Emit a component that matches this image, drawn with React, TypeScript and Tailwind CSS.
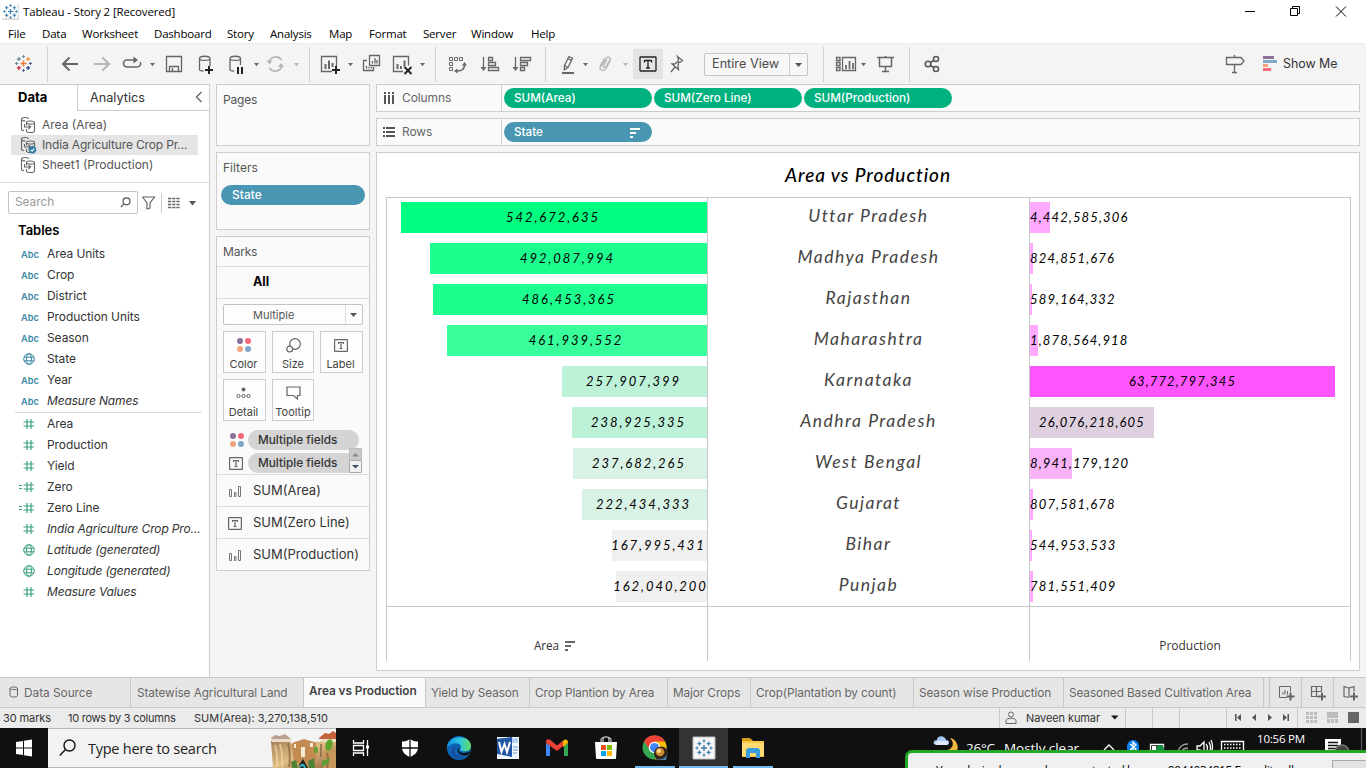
import React from "react";

type Kids = { children?: React.ReactNode };

const UI = "font-['Inter','Liberation_Sans',sans-serif]";
const SEGOE = "font-['Open_Sans','Noto_Sans',sans-serif]";

/* Toolbar cell: the viewBox uses the window's own coordinates. */
function Cell({ x, w, children }: Kids & { x: number; w: number }) {
  return (
    <svg className="shrink-0" width={w} height={40} viewBox={`${x} 44 ${w} 40`} fill="none" stroke="#666" strokeWidth={1.3}>
      {children}
    </svg>
  );
}
const Rule = () => <div className="h-[35px] w-px shrink-0 bg-[#cfcfcf]" />;
const Caret = ({ x, y = 63, fill = "#666" }: { x: number; y?: number; fill?: string }) => (
  <path d={`M${x} ${y}h5l-2.5 3.2z`} fill={fill} stroke="none" />
);

function Burst({ mono }: { mono?: boolean }) {
  const c = (s: string) => (mono ? "#3b7fae" : s);
  const plus = (x: number, y: number, r: number, col: string, k: number) => (
    <path key={`${x}-${y}`} d={`M${x - r} ${y}h${2 * r}M${x} ${y - r}v${2 * r}`} stroke={c(col)} strokeWidth={k} />
  );
  return (
    <>
      {plus(9, 9, 3, "#e8762c", 1.4)}
      {plus(9, 2, 1.6, "#6f8fae", 1)}
      {plus(9, 16, 1.6, "#5b6591", 1)}
      {plus(2, 9, 1.6, "#59879b", 1)}
      {plus(16, 9, 1.6, "#5b6591", 1)}
      {plus(4.4, 4.6, 2, "#59879b", 1.2)}
      {plus(13.6, 4.6, 2, "#eb912c", 1.2)}
      {plus(4.4, 13.4, 2, "#c72035", 1.2)}
      {plus(13.6, 13.4, 2, "#1f447e", 1.2)}
    </>
  );
}

function TitleBar() {
  return (
    <div className={`flex h-[22px] items-center bg-white text-black ${SEGOE}`}>
      <svg className="ml-[2px] mt-[1px]" width="17" height="17" viewBox="-1 0 20 18" fill="none">
        <path d="M19 0v18h-20" stroke="#bbb" fill="#f5f8fb" />
        <Burst mono />
      </svg>
      <span className="ml-1 mt-[1px] text-[11.4px] tracking-[-0.1px]">Tableau - Story 2 [Recovered]</span>
      <svg className="ml-auto mr-[18px]" width="106" height="20" viewBox="1242 0 106 20" fill="none" stroke="#000">
        <path d="M1245 10.5h10M1290.500 7.500h7v7h-7zM1292.500 7.500v-2h7v7h-2M1336 5.500l10 10M1346 5.500l-10 10" />
      </svg>
    </div>
  );
}

function MenuBar() {
  const items: [string, string][] = [
    ["File", "w-[34px]"], ["Data", "w-[40px]"], ["Worksheet", "w-[72px]"], ["Dashboard", "w-[73px]"],
    ["Story", "w-[43px]"], ["Analysis", "w-[59px]"], ["Map", "w-[40px]"], ["Format", "w-[54px]"],
    ["Server", "w-[48px]"], ["Window", "w-[60px]"], ["Help", "w-[40px]"],
  ];
  return (
    <div className={`flex h-[21px] items-center bg-white pt-[2px] pl-2 text-[11.5px] tracking-[-0.2px] text-black ${SEGOE}`}>
      {items.map(([t, w]) => <span key={t} className={`shrink-0 ${w}`}>{t}</span>)}
    </div>
  );
}

function Toolbar() {
  return (
    <div className="flex h-[41px] items-center border-t border-[#ececec] bg-[#f4f4f4]">
      <Cell x={0} w={47}><g transform="translate(14.500 54.500)"><Burst /></g></Cell>
      <Rule />
      <Cell x={48} w={40}><path d="M78 64H63M69.500 57.500L63 64l6.500 6.500" strokeWidth="2" /></Cell>
      <Cell x={88} w={30}><path d="M94 64h15M102.500 57.500L109 64l-6.500 6.500" stroke="#b5b5b5" strokeWidth="2" /></Cell>
      <Cell x={118} w={44}>
        <path d="M135 60h-8a3.500 3.500 0 0 0 0 7h10a3.500 3.500 0 0 0 3.300-5" strokeWidth="1.600" />
        <path d="M133.500 56.500v7l4.500-3.500z" fill="#666" stroke="none" />
        <Caret x={150} />
      </Cell>
      <Cell x={162} w={30}><path d="M166.500 56.500h15v15h-15zM169.500 71.500v-5h9v5M172.500 68v3.500" /></Cell>
      <Cell x={192} w={32}>
        <path d="M210 66v-7.500c0-3-10.500-3-10.500 0v11c0 1 2 1.500 4 1.500M199.500 58.500c0 2.500 10.500 2.500 10.500 0" />
        <path d="M209 66v8M205 70h8" stroke="#222" strokeWidth="2" />
      </Cell>
      <Cell x={224} w={40}>
        <path d="M240.500 65v-6.500c0-3-10.500-3-10.500 0v11c0 1 2 1.500 4 1.500M230 58.500c0 2.500 10.500 2.500 10.500 0" />
        <path d="M238 67v7M242 67v7" stroke="#222" strokeWidth="2" />
        <Caret x={254} />
      </Cell>
      <Cell x={264} w={45}>
        <path d="M269 62a7 7 0 0 1 12.500-2M282 66a7 7 0 0 1-12.500 2" stroke="#b5b5b5" strokeWidth="1.600" />
        <path d="M266.500 60.500l6 0-3 4zM284 67h-6l3-4z" fill="#b5b5b5" stroke="none" />
        <Caret x={294} fill="#b5b5b5" />
      </Cell>
      <Rule />
      <Cell x={310} w={47}>
        <path d="M332 71.500h-10.500v-15h15v10" />
        <path d="M325.500 64v5M329 60.500v8.500M332.500 63v4" strokeWidth="2" />
        <path d="M336 66v8M332 70h8" stroke="#222" strokeWidth="2" />
        <Caret x={348} />
      </Cell>
      <Cell x={357} w={30}>
        <path d="M369.500 55.500h10v10h-10zM367 60.500h-3.500v10h10v-3.500M366.500 66v2.500M369 67v1.500M371.500 67v1.500M372.500 61v2.500M375 58v5.500M377 60v3.500" />
      </Cell>
      <Cell x={387} w={48}>
        <path d="M403 71.500h-9.500v-15h15v9" />
        <path d="M397.500 64v5M401 66v3M404.500 60.500v6" strokeWidth="2" />
        <path d="M404.500 67l7 7M411.500 67l-7 7" stroke="#222" strokeWidth="2" />
        <Caret x={420} />
      </Cell>
      <Rule />
      <Cell x={436} w={38}>
        <path d="M449.500 57.500h3v3h-3zM454.500 57.500h3v3h-3zM459.500 57.500h3v3h-3zM449.500 62.500h3v3h-3zM449.500 67.500h3v3h-3z" strokeWidth="1" />
        <path d="M464.500 65c0 4-2.500 6-7.500 6" strokeWidth="1.500" />
        <path d="M462 65.500l2.500-3.500 2.500 3.500zM457.500 68.500v5l-3.500-2.500z" fill="#666" stroke="none" />
      </Cell>
      <Cell x={474} w={32}>
        <path d="M483.500 57v12M488.500 57.500h4v3h-4zM488.500 62.500h7v3h-7zM488.500 67.500h10v3h-10z" />
        <path d="M480.500 67h6l-3 4z" fill="#666" stroke="none" />
      </Cell>
      <Cell x={506} w={39}>
        <path d="M515.500 57v12M520.500 57.500h10v3h-10zM520.500 62.500h7v3h-7zM520.500 67.500h4v3h-4z" />
        <path d="M512.500 67h6l-3 4z" fill="#666" stroke="none" />
      </Cell>
      <Rule />
      <Cell x={546} w={50}>
        <path d="M569 56.500l3.500 1.700-4.500 9.300-3.800 2.200.3-4.200zM564.500 65.500l3.500 2M568 58.500l3.500 1.800" />
        <path d="M562 73h12" strokeWidth="2" />
        <Caret x={583} />
      </Cell>
      <Cell x={596} w={37}>
        <path d="M601 67l4.500-8c1.500-3.500 6-1.500 4.500 2l-4 7.500c-2.500 4-7.500 1-5.500-3l4-7M603.500 66l3.500-6.500M603.500 66c0 2.500 2 2 3 0l4.500-8" stroke="#b5b5b5" />
        <Caret x={623} fill="#b5b5b5" />
      </Cell>
      <div className="flex h-[30px] w-[30px] shrink-0 items-center justify-center bg-[#e4e4e4]">
        <svg width="18" height="16" viewBox="0 0 18 16" fill="none" stroke="#222" strokeWidth="1.300"><rect x="1" y="1" width="16" height="14" rx="0.500" /><path d="M5.500 6.500v-2h7v2M9 4.500v7.500M7 12h4" /></svg>
      </div>
      <Cell x={663} w={41}><path d="M677.500 56.500l5 4-1.500 1.200-2.500 1 -.5 4.300 .5 2.500-6.500-5.500 2.500 0 3.500-2.500 .5-2.500zM675 67l-4 5" /></Cell>
      <div className={`flex h-[23px] w-[104px] shrink-0 items-center rounded-[2px] border border-[#c4c4c4] bg-[#f7f7f7] text-[12.7px] text-[#4a4a4a] ${UI}`}>
        <span className="w-[84px] pl-[7px] whitespace-nowrap">Entire View</span>
        <svg width="18" height="21" viewBox="0 0 18 21"><path d="M.5 0v21" stroke="#ccc" /><path d="M6 9h7l-3.500 4z" fill="#555" /></svg>
      </div>
      <Cell x={808} w={15} />
      <Rule />
      <Cell x={824} w={47}>
        <path d="M836.500 57.500h3.500v3h-3.500zM836.500 62.500h3.500v3h-3.500zM836.500 67.500h3.500v3h-3.500zM842.500 57.500h13v13h-13z" />
        <path d="M846 65v4M849.500 61v8M853 63v6" strokeWidth="1.700" />
        <Caret x={861} />
      </Cell>
      <Cell x={871} w={38}><path d="M877 57.500h17M879.500 58v8.500h12v-8.500M885.500 66.500v5M882 71.500h7M885.500 56v1.500" strokeWidth="1.500" /></Cell>
      <Rule />
      <Cell x={910} w={40}>
        <g strokeWidth="1.500" stroke="#555"><circle cx="928" cy="64" r="2.800" /><circle cx="936" cy="59" r="2.500" /><circle cx="936" cy="69" r="2.500" /><path d="M930.500 62.500l3.200-2M930.500 65.500l3.200 2" /></g>
      </Cell>
      <div className="grow" />
      <Cell x={1222} w={36}><path d="M1226.500 57.500h14.500l3 3.500-3 3.500h-14.500zM1234.500 55v2.500M1234.500 64.500v8M1232 72.500h5" /></Cell>
      <Cell x={1258} w={25}>
        <g stroke="none"><path d="M1263 56h11v3h-11z" fill="#8b7099" /><path d="M1263 60h14v3h-14z" fill="#82a6cb" /><path d="M1263 64h5v3h-5z" fill="#f2a57c" /><path d="M1263 68h8v3h-8z" fill="#fa6a7c" /></g>
      </Cell>
      <span className={`w-[83px] shrink-0 text-[12.4px] text-[#333] ${UI}`}>Show Me</span>
    </div>
  );
}

function SourceIcon({ on }: { on?: boolean }) {
  return (
    <svg className="ml-[20px] mr-[7px] shrink-0" width="17" height="18" viewBox="0 0 17 18" fill="none" stroke="#666" strokeWidth="1.100">
      <path d="M4 14.500c-2 0-2.500-.5-2.500-1.500V3c0-2 7-2 7 0M1.500 3c0 1.500 2 2 4 2M6.500 6.500v3M6.500 13v2c0 2 8 2 8 0V6.500M6.500 6.500c0-2 8-2 8 0s-8 2-8 0M4.500 8v3h6M8.500 9l2 2-2 2" />
      {on && <><circle cx="12.500" cy="13.800" r="3.700" fill="#2f7fa3" stroke="none" /><path d="M10.800 13.800l1.300 1.300 2.200-2.500" stroke="#fff" /></>}
    </svg>
  );
}

const Globe = ({ c }: { c: string }) => (
  <svg width="12" height="12" viewBox="0 0 12 12" fill="none" stroke={c}><circle cx="6" cy="6" r="5.300" /><ellipse cx="6" cy="6" rx="2.500" ry="5.300" /><path d="M1 4.200h10M1 7.800h10" /></svg>
);
const Hash = ({ eq }: { eq?: boolean }) => (
  <svg width="15" height="12" viewBox="-4 0 15 12" fill="none" stroke="#3aa27c" strokeWidth="1.200"><path d="M.5 4h10.500M.5 8h10.500M4 1v10M8 1v10" />{eq && <path d="M-4 4.500h3M-4 7.500h3" />}</svg>
);

function Field({ kind, name }: { kind: string; name: string }) {
  const italic = /^(Measure|Lat|Long|India)/.test(name);
  return (
    <div className={`flex h-[21px] items-center pt-px text-[12px] whitespace-nowrap text-[#333] ${UI}`}>
      <span className={`flex w-[47px] shrink-0 items-center ${kind[0] === "a" ? "pl-[21px]" : kind[0] === "g" ? "pl-[23px]" : "pl-[19px]"}`}>
        {kind === "a" && <span className="pt-px text-[9.2px] font-semibold text-[#3c88a5]">Abc</span>}
        {kind === "g" && <Globe c="#3c88a5" />}
        {kind === "gg" && <Globe c="#3aa27c" />}
        {kind[0] === "h" && <Hash eq={kind === "he"} />}
      </span>
      <span className={italic ? "italic tracking-[-0.15px]" : "tracking-[-0.08px]"}>{name}</span>
    </div>
  );
}

function DataPane() {
  const dims: [string, string][] = [["a", "Area Units"], ["a", "Crop"], ["a", "District"], ["a", "Production Units"], ["a", "Season"], ["g", "State"], ["a", "Year"], ["a", "Measure Names"]];
  const meas: [string, string][] = [["h", "Area"], ["h", "Production"], ["h", "Yield"], ["he", "Zero"], ["he", "Zero Line"], ["h", "India Agriculture Crop Pro..."], ["gg", "Latitude (generated)"], ["gg", "Longitude (generated)"], ["h", "Measure Values"]];
  const srcs = ["Area (Area)", "India Agriculture Crop Pr...", "Sheet1 (Production)"];
  return (
    <div className={`w-[210px] shrink-0 border-t border-r border-[#cdcdcd] bg-white ${UI}`}>
      <div className="flex h-[26px]">
        <div className="w-[77px] shrink-0 pt-[3px] pl-[18px] text-[13px] font-bold text-black">Data</div>
        <div className="flex grow justify-between border-b border-l border-[#cdcdcd] pt-[3px] pl-[12px] text-[12.700px] text-[#333]">
          Analytics
          <svg className="mt-[3px] mr-[6px]" width="8" height="12" viewBox="0 0 8 12" fill="none" stroke="#666" strokeWidth="1.400"><path d="M6.500 1L1.500 6l5 5" /></svg>
        </div>
      </div>
      <div className="mt-[4px] flex h-[68px] flex-col border-b border-[#dcdcdc]">
        {srcs.map((s, i) => (
          <div key={s} className={i === 1 ? "mr-[11px] ml-[11px] flex h-[20px] items-center bg-[#e5e5e5] text-[12px] whitespace-nowrap text-[#555]" : "flex h-[20px] items-center text-[12px] whitespace-nowrap text-[#555]"}>
            <span className={i === 1 ? "-ml-[11px] flex" : "flex"}><SourceIcon on={i === 1} /></span>
            <span className={i === 1 ? "-ml-[2px] tracking-[-0.15px]" : "-ml-[2px]"}>{s}</span>
          </div>
        ))}
      </div>
      <div className="mt-[8px] flex h-[23px] items-center pl-[8px]">
        <div className="flex h-[23px] w-[130px] items-center justify-between rounded-[2px] border border-[#c4c4c4] pr-[6px] pl-[6px] text-[11.800px] text-[#999]">
          Search
          <svg width="11" height="11" viewBox="0 0 11 11" fill="none" stroke="#555" strokeWidth="1.200"><circle cx="6.500" cy="4.300" r="3.500" /><path d="M4 6.800L.8 10" /></svg>
        </div>
        <svg className="ml-[4px]" width="56" height="20" viewBox="142 192 56 20" fill="none" stroke="#666">
          <path d="M142.500 196h12l-4.500 6v5l-3 1v-6z" strokeWidth="1.200" />
          <path d="M161.500 192v20" stroke="#ccc" />
          <path d="M168 197.500h12M168 200.500h12M168 203.500h12M168 206.500h12" strokeWidth="1.400" strokeDasharray="3.200 1" />
          <path d="M189 200h7l-3.500 4.500z" fill="#555" stroke="none" />
        </svg>
      </div>
      <div className="mt-[7px] mb-[3px] h-[19px] pl-[18px] text-[13px] leading-[19px] font-semibold text-black">Tables</div>
      {dims.map(([k, n]) => <Field key={n} kind={k} name={n} />)}
      <div className="ml-[15px] mr-[7px] mt-px h-px bg-[#dcdcdc]" />
      {meas.map(([k, n]) => <Field key={n} kind={k} name={n} />)}
    </div>
  );
}

const Dots = () => (
  <svg width="16" height="16" viewBox="0 0 16 16"><circle cx="4" cy="4" r="3" fill="#8b7099" /><circle cx="12" cy="4" r="3" fill="#fa6a7c" /><circle cx="4" cy="12" r="3" fill="#f2a57c" /><circle cx="12" cy="12" r="3" fill="#82a6cb" /></svg>
);
const TBox = () => (
  <svg width="14" height="13" viewBox="0 0 14 13" fill="none" stroke="#666" strokeWidth="1.200"><rect x=".6" y=".6" width="12.800" height="11.800" rx=".5" /><path d="M4.500 5V3.500h5V5M7 3.500v6M5.500 9.500h3" /></svg>
);
const Bars = () => (
  <svg width="14" height="13" viewBox="0 0 14 13" fill="none" stroke="#777"><path d="M1.500 4.500h2v7h-2zM6.500 7.500h1.500v4H6.500zM10.500 1.500h2v10h-2z" /></svg>
);

function MarkButton({ label, wide, children }: Kids & { label: string; wide?: boolean }) {
  return (
    <div className={`flex h-[42px] flex-col items-center justify-between border border-[#cdcdcd] bg-white/60 pt-[5px] text-[11px] leading-[15px] text-[#444] ${wide ? "w-[43px] pr-[2px]" : "w-[42px]"}`}>
      <span className="flex h-[16px] items-center">{children}</span>
      {label}
    </div>
  );
}

function Cards() {
  const card = "border border-[#cdcdcd] bg-[#fafafa]";
  return (
    <div className={`ml-[6px] flex w-[154px] shrink-0 flex-col gap-[6px] text-[12px] text-[#555] ${UI}`}>
      <div className={`h-[62px] pt-[7px] pl-[6px] leading-[16px] tracking-[-0.2px] ${card}`}>Pages</div>
      <div className={`h-[78px] pt-[7px] pl-[4px] ${card}`}>
        <div className="pl-[2px] leading-[16px]">Filters</div>
        <div className="mt-[9px] h-[20px] w-[144px] rounded-full bg-[#4996b2] pl-[11px] text-[12px] leading-[20px] font-medium text-white">State</div>
      </div>
      <div className={`h-[335px] ${card}`}>
        <div className="h-[30px] border-b border-[#dcdcdc] pt-[7px] pl-[6px] leading-[16px] tracking-[-0.2px]">Marks</div>
        <div className="h-[32px] border-b border-[#dcdcdc] pl-[36px] text-[12.5px] leading-[30px] font-bold text-black">All</div>
        <div className="mt-[5px] ml-[6px] flex h-[21px] w-[140px] items-center rounded-[2px] border border-[#c4c4c4] bg-white/50 text-[11px]">
          <span className="w-[121px] pt-px pl-[29px]">Multiple</span>
          <svg width="17" height="19" viewBox="0 0 17 19"><path d="M.5 0v19" stroke="#ddd" /><path d="M5 8h7l-3.500 4z" fill="#555" /></svg>
        </div>
        <div className="mt-[6px] ml-[6px] flex flex-wrap gap-[6px]">
          <MarkButton label="Color" wide><Dots /></MarkButton>
          <MarkButton label="Size"><svg width="15" height="15" viewBox="0 0 15 15" fill="none" stroke="#666" strokeWidth="1.200"><circle cx="9" cy="6" r="5.300" /><circle cx="3.700" cy="11" r="2.900" fill="#fafafa" /></svg></MarkButton>
          <MarkButton label="Label" wide><TBox /></MarkButton>
          <MarkButton label="Detail" wide><svg width="15" height="12" viewBox="0 0 15 12" fill="none" stroke="#666"><circle cx="7.500" cy="2.500" r="2" fill="#666" stroke="none" /><circle cx="2.500" cy="9" r="1.600" /><circle cx="7.500" cy="9" r="1.600" /><circle cx="12.500" cy="9" r="1.600" /></svg></MarkButton>
          <MarkButton label="Tooltip"><svg width="15" height="14" viewBox="0 0 15 14" fill="none" stroke="#666" strokeWidth="1.200"><path d="M1 1h13v8.500h-2.500V13L7.500 9.500H1z" /></svg></MarkButton>
        </div>
        <div className="relative mt-[9px] flex h-[44px] flex-col gap-[3px] text-[11.800px] font-medium text-[#333]">
          <div className="flex h-[20px] items-center pl-[12px]"><Dots /><span className="ml-[3px] h-[20px] w-[111px] rounded-full bg-[#d4d4d4] pl-[10px] leading-[20px]">Multiple fields</span></div>
          <div className="flex h-[20px] items-center pl-[12px]"><span className="flex w-[16px] justify-start"><TBox /></span><span className="ml-[3px] h-[20px] w-[102px] rounded-l-full bg-[#d4d4d4] pl-[10px] leading-[20px]">Multiple fields</span></div>
          <svg className="absolute top-[18px] left-[132px]" width="13" height="25" viewBox="0 0 13 25"><path d="M.5.5h12v12H.5z" fill="#c9c9c9" stroke="#bbb" /><path d="M.5 12.500h12v12H.5z" fill="#f0f0f0" stroke="#aaa" /><path d="M3 8.500h7L6.500 5z" fill="#888" /><path d="M3 17h7l-3.500 3.500z" fill="#3d4a66" /></svg>
        </div>
        <div className="text-[13px] text-[#333]">
          {["SUM(Area)", "SUM(Zero Line)", "SUM(Production)"].map((t, i) => (
            <div key={t} className="flex h-[32px] items-center border-t border-[#dcdcdc] pt-px pl-[11px] whitespace-nowrap"><span className="w-[25px]">{i === 1 ? <TBox /> : <Bars />}</span>{t}</div>
          ))}
        </div>
      </div>
    </div>
  );
}

const HAND = "font-['Lato','Liberation_Sans',sans-serif] italic";

const AREA: [string, string, string][] = [
  ["542,672,635", "w-[306px]", "bg-[#00ff80]"], ["492,087,994", "w-[277px]", "bg-[#1cff8f]"], ["486,453,365", "w-[274px]", "bg-[#1cff8f]"],
  ["461,939,552", "w-[260px]", "bg-[#38ff9c]"], ["257,907,399", "w-[145px]", "bg-[#bdf2d9]"], ["238,925,335", "w-[135px]", "bg-[#bdf2d9]"],
  ["237,682,265", "w-[134px]", "bg-[#d8f2e5]"], ["222,434,333", "w-[125px]", "bg-[#d8f2e5]"], ["167,995,431", "w-[95px]", "bg-[#f0f0f0]"], ["162,040,200", "w-[91px]", "bg-[#f0f0f0]"],
];
const STATES = ["Uttar Pradesh", "Madhya Pradesh", "Rajasthan", "Maharashtra", "Karnataka", "Andhra Pradesh", "West Bengal", "Gujarat", "Bihar", "Punjab"];
const PROD: [string, string, string][] = [
  ["4,442,585,306", "w-[20px]", "bg-[#ffaaff]"], ["824,851,676", "w-[3px]", "bg-[#ffaaff]"], ["589,164,332", "w-[2px]", "bg-[#ffaaff]"],
  ["1,878,564,918", "w-[8px]", "bg-[#ffaaff]"], ["63,772,797,345", "w-[305px] justify-center", "bg-[#ff55ff]"], ["26,076,218,605", "w-[124px] justify-center", "bg-[#dfd0df]"],
  ["8,941,179,120", "w-[42px]", "bg-[#f9b4f9]"], ["807,581,678", "w-[3px]", "bg-[#ffaaff]"], ["544,953,533", "w-[2px]", "bg-[#ffaaff]"], ["781,551,409", "w-[3px]", "bg-[#ffaaff]"],
];

function Chart() {
  const line = "border-[#c8c8c8]";
  const num = `text-[13px] text-black whitespace-nowrap ${HAND}`;
  return (
    <div className="h-[519px] border border-[#cdcdcd] bg-white pl-[9px]">
      <div className={`h-[44px] w-[965px] pt-[9px] pl-[399px] text-[19px] leading-[26px] font-medium whitespace-nowrap text-black ${HAND}`}><span className="tracking-[0.95px]">Area vs Production</span></div>
      <div className={`grid w-[965px] grid-cols-[321px_322px_321px] border-t border-l ${line}`}>
        <div className={`h-[409px] border-r border-b pt-[4px] ${line}`}>
          {AREA.map(([t, w, c]) => (
            <div key={t} className="mb-[10px] flex h-[31px] justify-end">
              <div className={`flex shrink-0 items-center justify-center ${w} ${c}`}><span className={`-ml-[2px] tracking-[1.95px] ${num}`}>{t}</span></div>
            </div>
          ))}
        </div>
        <div className={`h-[409px] border-r border-b text-center ${line}`}>
          {STATES.map((s) => <div key={s} className={`h-[41px] text-[17.5px] leading-[36px] tracking-[1.5px] text-[#444] ${HAND}`}>{s}</div>)}
        </div>
        <div className={`h-[409px] border-r border-b pt-[4px] ${line}`}>
          {PROD.map(([t, w, c]) => (
            <div key={t} className={`mb-[10px] flex h-[31px] items-center ${w} ${c}`}><span className={`tracking-[1.150px] ${num}`}>{t}</span></div>
          ))}
        </div>
        <div className={`flex h-[54px] items-center justify-center gap-[6px] border-r pt-[24px] pl-[16px] text-[11.700px] text-[#333] ${line} ${SEGOE}`}>
          Area
          <svg width="11" height="10" viewBox="0 0 11 10"><path d="M0 0h10v2H0zM0 4h6v2H0zM0 8h3v2H0z" fill="#666" /></svg>
        </div>
        <div className={`h-[54px] border-r ${line}`} />
        <div className={`flex h-[54px] items-center justify-center border-r pt-[24px] text-[12px] text-[#333] ${line} ${SEGOE}`}>Production</div>
      </div>
    </div>
  );
}

function Shelf({ label, rows, children }: Kids & { label: string; rows?: boolean }) {
  return (
    <div className={`flex h-[28px] border border-[#cdcdcd] bg-[#fafafa] text-[12px] ${UI}`}>
      <div className="flex w-[125px] shrink-0 items-center border-r border-[#cdcdcd] pl-[6px] text-[#666]">
        <svg className="mr-[7px]" width="12" height="12" viewBox="0 0 12 12" fill="#555">
          {rows ? <path d="M0 1h2v2H0zM3 1h9v2H3zM0 5h2v2H0zM3 5h9v2H3zM0 9h2v2H0zM3 9h9v2H3z" /> : <path d="M1 0h2v2H1zM1 3h2v9H1zM5 0h2v2H5zM5 3h2v9H5zM9 0h2v2H9zM9 3h2v9H9z" />}
        </svg>
        <span className="tracking-[-0.1px]">{label}</span>
      </div>
      <div className="flex items-center gap-[2px] pl-[2px] text-[11.700px] font-medium text-white">{children}</div>
    </div>
  );
}

function View() {
  const pill = "flex h-[20px] w-[148px] items-center rounded-full pt-px pl-[10px]";
  return (
    <div className="ml-[6px] flex w-[984px] shrink-0 flex-col gap-[6px]">
      <Shelf label="Columns">
        {["SUM(Area)", "SUM(Zero Line)", "SUM(Production)"].map((t) => <div key={t} className={`bg-[#00b180] ${pill}`}>{t}</div>)}
      </Shelf>
      <Shelf label="Rows" rows>
        <div className={`justify-between bg-[#4996b2] pr-[12px] ${pill}`}>State
          <svg width="10" height="10" viewBox="0 0 10 10"><path d="M0 0h10v2H0zM0 4h6v2H0zM0 8h3v2H0z" fill="#fff" /></svg>
        </div>
      </Shelf>
      <Chart />
    </div>
  );
}

function SheetTabs() {
  const tabs: [string, string][] = [
    ["Statewise Agricultural Land", "w-[173px]"], ["Area vs Production", "w-[122px]"], ["Yield by Season", "w-[104px]"], ["Crop Plantion by Area", "w-[138px]"],
    ["Major Crops", "w-[83px]"], ["Crop(Plantation by count)", "w-[163px]"], ["Season wise Production", "w-[150px]"], ["Seasoned Based Cultivation Area", "w-[200px]"],
  ];
  return (
    <div className={`flex h-[31px] border-y border-[#c8c8c8] bg-[#e6e6e6] text-[11.8px] whitespace-nowrap text-[#666] ${UI}`}>
      <div className="flex w-[130px] shrink-0 items-center pl-[9px]">
        <svg className="mr-[5px] mb-[2px]" width="10" height="12" viewBox="0 0 10 12" fill="none" stroke="#666"><path d="M1 2.500v7c0 2 7.500 2 7.500 0v-7c0-2-7.500-2-7.500 0zM1 2.500c0 1.500 7.500 1.500 7.500 0" /></svg>
        <span className="pt-[2px]">Data Source</span>
      </div>
      {tabs.map(([t, w], i) => (
        <div key={t} className={`flex shrink-0 items-center border-l border-[#c8c8c8] ${w} ${i === 1 ? "bg-[#fafafa] pb-px pl-[5px] text-[11.8px] font-semibold tracking-[-0.05px] text-[#444]" : i === 0 ? "pt-[2px] pl-[6px] tracking-[-0.08px]" : "pt-[2px] pl-[5px] tracking-[-0.1px]"}`}>{t}</div>
      ))}
      <svg className="shrink-0" width="103" height="29" viewBox="1263 678 103 29" fill="none" stroke="#666" strokeWidth="1.200">
        <path d="M1263.500 678v29M1269.500 678v29M1301.500 678v29M1333.500 678v29" stroke="#c8c8c8" />
        <path d="M1287 697.500h-7.500v-11h11v5M1283 692v2.500M1285 690v4.500M1287.500 691v3.500" strokeWidth="1" />
        <path d="M1318 696.500h-6.500v-10h10v5M1311.500 691.500h10M1316.500 686.500v10" />
        <path d="M1349 697.500l-5-1v-10l5 1.500 5-1.500v5M1349 688v9" />
        <path d="M1290.500 692.500v8M1286.500 696.500h8M1322 692.500v8M1318 696.500h8M1354 692.500v8M1350 696.500h8" strokeWidth="2" />
      </svg>
    </div>
  );
}

function StatusBar() {
  return (
    <div className={`flex h-[20px] items-center bg-[#ebebeb] text-[11px] whitespace-nowrap text-[#333] ${UI}`}>
      <span className="w-[65px] shrink-0 pl-[3px] tracking-[-0.1px]">30 marks</span>
      <span className="ml-[3px] w-[126px] shrink-0 tracking-[-0.25px]">10 rows by 3 columns</span>
      <span>SUM(Area): 3,270,138,510</span>
      <div className="ml-auto flex h-[20px] w-[367px] shrink-0 items-center border-l border-[#c8c8c8]">
        <svg className="ml-[5px]" width="12" height="14" viewBox="0 0 12 14" fill="none" stroke="#666"><circle cx="6" cy="3.500" r="2.500" /><path d="M1 12.500v-3c0-3 10-3 10 0v3z" /></svg>
        <span className="ml-[9px] w-[75px] tracking-[-0.1px]">Naveen kumar</span>
        <svg className="shrink-0" width="264" height="20" viewBox="1102 708 264 20">
          <path d="M1112 715.500h7.500l-3.700 4z" fill="#111" />
          <path d="M1126.500 708v20M1153.500 708v20M1180.500 708v20M1227.500 708v20M1298.500 708v20" stroke="#c8c8c8" />
          <path d="M1236 714h1.500v7h-1.500zM1242 714v7l-4-3.500zM1257 714v7l-4-3.500zM1269 714v7l4-3.500zM1284 714v7l4-3.500zM1288.500 714h1.500v7h-1.500z" fill="#555" />
          <path d="M1307 712h3v3h-3zM1311 712h3v3h-3zM1315 712h3v3h-3zM1307 716h3v3h-3zM1311 716h3v3h-3zM1315 716h3v3h-3zM1307 720h3v3h-3zM1311 720h3v3h-3zM1315 720h3v3h-3zM1328 712h11v6h-11zM1328 719h3v4h-3zM1332 719h3v4h-3zM1336 719h3v4h-3z" fill="#bdbdbd" />
          <path d="M1349 712h11v11h-11z" fill="#666" />
        </svg>
      </div>
    </div>
  );
}

function TaskIcon({ active, open, children }: Kids & { active?: boolean; open?: boolean }) {
  return (
    <div className={`relative flex h-[40px] w-[49px] shrink-0 items-center justify-center ${active ? "bg-[#343434]" : ""}`}>
      <svg width="26" height="26" viewBox="0 0 26 26" fill="none">{children}</svg>
      {open && <div className={`absolute bottom-0 h-[2px] bg-[#76b9ed] ${active ? "w-full" : "w-[40px]"}`} />}
    </div>
  );
}

function Canyon() {
  return (
    <svg className="absolute top-[2px] right-0" width="66" height="37" viewBox="0 0 66 37">
      <defs><linearGradient id="rock" x1="0" y1="0" x2="1" y2="1"><stop offset="0" stopColor="#9b7650" /><stop offset=".5" stopColor="#e1bd83" /><stop offset="1" stopColor="#94633a" /></linearGradient></defs>
      <path d="M1 10l18-1 3 5 10-4 18 1 3-5h13v31H3z" fill="url(#rock)" />
      <path d="M22 12l12-4 12 4v20H24z" fill="#c38b52" />
      <path d="M1 7l4-3 5 1 5-2 6 5H1z" fill="#b9a093" /><path d="M2 8h19v3H2z" fill="#e9dcca" />
      <path d="M49 7l6-5 4 1 4-3 3 2v6H49z" fill="#c2613b" /><path d="M51 8h15v3H51z" fill="#f1dfc5" />
      <path d="M24 13h2v4h-2zM40 12h3v4h-3zM31 16h4v10h-4z" fill="#f7ead3" />
      <path d="M54 20l12-5v22H53z" fill="#c5965c" />
      <path d="M5 14q3 10 2 22M10 13q3 10 2 23" stroke="#f0d6a4" strokeWidth="2" fill="none" opacity=".7" />
      <path d="M18 12q3 12 1 24M51 13v13M57 22q2 8 0 15" stroke="#85603c" strokeWidth="2" fill="none" opacity=".7" />
      <path d="M21 31l5-2 2 8h-6zM38 30l6-3 1 10h-6z" fill="#4e8338" /><path d="M29 34l4-6 5 9h-8z" fill="#26201c" /><path d="M30 36q3-5 5 1" stroke="#31bed1" strokeWidth="2" fill="none" />
      <ellipse cx="59" cy="14" rx="3.500" ry="6" fill="#5ca52a" transform="rotate(15 59 14)" /><ellipse cx="46" cy="19" rx="2" ry="3.500" fill="#63a32e" /><path d="M52 30l8-3-2 6-6 3z" fill="#5c9e35" />
    </svg>
  );
}

function Taskbar() {
  return (
    <div className={`relative flex h-[40px] overflow-hidden bg-[#101010] ${SEGOE}`}>
      <svg className="shrink-0" width="48" height="40" viewBox="0 0 48 40"><path d="M16 14l7-1v6.500h-7zM24 12.800l8-1.300v8h-8zM16 20.500h7V27l-7-1zM24 20.500h8v8l-8-1.300z" fill="#fff" /></svg>
      <div className="relative flex w-[288px] shrink-0 items-center border-t border-b border-[#b8b8b8] bg-[#f2f2f2] text-[14.5px] text-[#222]">
        <svg className="ml-[11px] mr-[12px]" width="17" height="18" viewBox="0 0 17 18" fill="none" stroke="#111" strokeWidth="1.400"><circle cx="10.500" cy="6.500" r="5.500" /><path d="M6.500 10.500L.8 16.500" /></svg>
        <span className="pt-px tracking-[-0.25px]">Type here to search</span>
        <Canyon />
      </div>
      <TaskIcon><path d="M5.500 5v3h10V5M5.500 21v-3h10v3M5.500 10.500h10v5h-10zM19.500 5v16" stroke="#fff" strokeWidth="1.300" /><path d="M18 10.500h3v3h-3z" fill="#fff" /></TaskIcon>
      <TaskIcon><path d="M13 4c3 2 5 2.500 8 2.500V12c0 5-3 8-8 10-5-2-8-5-8-10V6.500c3 0 5-.5 8-2.500z" fill="#fff" /><path d="M13 4v18M5 13h16" stroke="#101010" strokeWidth="1.300" /></TaskIcon>
      <TaskIcon>
        <defs><linearGradient id="edge" x1="0" y1="0" x2="1" y2="0"><stop offset="0" stopColor="#168fe0" /><stop offset=".5" stopColor="#2bc3e7" /><stop offset="1" stopColor="#65dc61" /></linearGradient></defs>
        <circle cx="13" cy="13" r="12" fill="#0c66b7" /><path d="M1 13C1-1 25-1 25 11c0 5-5 6-9 5-3-1-1-2-1-4 0-5-10-5-14 1z" fill="url(#edge)" /><path d="M9 13c-2 8 7 9 12 6-4 8-15 5-16-2 0-4 4-7 8-6-2 0-3 1-4 2z" fill="#164f9c" /><path d="M13.500 12c-3 4 2 8 9 5l2-1c-1 2-2 3-3 4-5 1-10-1-10-5 0-1 1-2 2-3z" fill="#111" />
      </TaskIcon>
      <TaskIcon><path d="M2 2h22v22H2z" fill="#f3f8ff" /><path d="M3 3h20v5H3z" fill="#b8d2f2" /><path d="M2 4l15-2v20L2 19z" fill="#2458a7" /><path d="M4 7l2.500 10 3-8 2.500 8 3-10" stroke="#fff" strokeWidth="2" /><path d="M18 12h5M18 15h5M18 18h4" stroke="#6b9cd3" /></TaskIcon>
      <TaskIcon><path d="M2 8v13h4V11z" fill="#4285f4" /><path d="M20 11v10h4V8z" fill="#34a853" /><path d="M2 7c0-3 3-3.500 5-1.500l6 5 6-5V11l-6 5-11-8z" fill="#ea4335" /><path d="M19 6c3-3 5-1 5 2l-5 4z" fill="#fbbc04" /></TaskIcon>
      <TaskIcon><path d="M2 7h22l-1 16c0 1-1 1-1 1H4c-1 0-1-1-1-1z" fill="#fff" /><path d="M8 8V5c0-4 10-4 10 0v3M10 7V4c0-3 6-3 6 0v3" stroke="#ccc" strokeWidth="1.200" /><path d="M8 10h5v5H8z" fill="#f25022" /><path d="M14 10h5v5h-5z" fill="#7fba00" /><path d="M8 16h5v5H8z" fill="#00a4ef" /><path d="M14 16h5v5h-5z" fill="#ffb900" /></TaskIcon>
      <TaskIcon open>
        <circle cx="12.500" cy="12.500" r="12" fill="#34a853" /><path d="M2 6.500a12 12 0 0 1 21 0L12.500 13 8 15z" fill="#ea4335" /><path d="M23 6.500A12 12 0 0 1 13 24.500l5-10-5.500-8z" fill="#fbbc04" /><circle cx="12.500" cy="12.500" r="5.800" fill="#fff" /><circle cx="12.500" cy="12.500" r="4.500" fill="#4285f4" />
        <circle cx="19" cy="18.500" r="7" fill="#34251a" /><circle cx="18" cy="17" r="4.300" fill="#c98932" /><circle cx="17" cy="16" r="2" fill="#ffe08b" /><path d="M14 23c4 3 8 1 11-3l-1 5h-8z" fill="#4282ac" />
      </TaskIcon>
      <TaskIcon active open><path d="M2 2h22v22H2z" fill="#f7f7f7" stroke="#bbb" /><g transform="translate(4 4)"><Burst mono /></g></TaskIcon>
      <TaskIcon open><path d="M2 4h9l2 2h11v16H2z" fill="#f8c844" /><path d="M2 3h8l2 3H2z" fill="#d99a17" /><path d="M2 8h22v13H2z" fill="#ffda72" /><path d="M6 23v-8l2-2h10l2 2v8h-4v-5h-6v5z" fill="#379ce0" /></TaskIcon>
      <div className="relative ml-auto flex h-[40px] w-[436px] shrink-0 text-white">
        <svg className="shrink-0" width="36" height="30" viewBox="930 728 36 30"><path d="M950 738c5 5 3 11-3 12 4 8 15 1 9-8-2-3-4-4-6-4z" fill="#f4b642" /><path d="M937 745c-5 0-4-5 0-5 0-5 8-5 9 0 4 0 4 5 0 5z" fill="#a8c8f4" /><path d="M938 745c-4 0-3-3 0-4h8c3 1 3 4 0 4z" fill="#dce9fb" /></svg>
        <span className="mt-[10px] w-[38px] text-[13.500px] leading-[20px] tracking-[-0.2px]">26°C</span>
        <span className="mt-[10px] text-[13.500px] leading-[20px] tracking-[-0.050px] whitespace-nowrap">Mostly clear</span>
        <svg className="absolute top-0 left-[165px]" width="271" height="40" viewBox="1095 728 271 40" fill="none" stroke="#fff" strokeWidth="1.300">
          <path d="M1104 750l5-5 5 5" /><rect x="1127" y="740" width="12" height="18" rx="6" fill="#087ef0" stroke="none" /><path d="M1130 744l6 5-3 3v-10l3 3-6 5" />
          <path d="M1150.500 744.500h13v8h-13z" /><path d="M1152 746h4v5h-4z" fill="#fff" stroke="none" /><circle cx="1160" cy="749" r="4" fill="#178c45" stroke="none" />
          <path d="M1178 752c1-5 5-8 10-8M1181 753c1-3 4-5 7-5" stroke="#999" /><path d="M1185 752l3-2" />
          <path d="M1197 746h3l4-4v12l-4-4h-3zM1206 744q3 4 0 8M1209 742q3 6 0 11M1211 740q3 7 0 13" />
          <path d="M1221.500 741.500h22v12h-22z" /><path d="M1224 744.500h18M1224 748h18" strokeDasharray="1.500 1.500" /><path d="M1226 751h13" />
          <path d="M1325 739h16v14h-16z" fill="#fff" stroke="none" /><path d="M1328 742.500h10M1328 745.500h10M1328 748.500h8" stroke="#111" /><circle cx="1342" cy="752" r="7" fill="#444" stroke="#777" /><path d="M1361.500 728v40" stroke="#555" />
        </svg>
        <span className="absolute top-[2px] left-[327px] text-[11.5px] leading-[18px] tracking-[-0.2px] whitespace-nowrap">10:56 PM</span>
      </div>
      <div className="absolute top-[22px] left-[905px] h-[40px] w-[470px] rounded-tl-[7px] border-[3px] border-[#22a822] bg-[#f0f0f0] text-black">
        <div className="flex justify-between pt-[7px] pr-[5px] pl-[28px]">
          <span className="pt-[2px] text-[12px] leading-[18px] tracking-[-0.45px] whitespace-nowrap">Your device has now been protected by user 9944034815 Expedite all</span>
          <span className="h-[20px] w-[35px] shrink-0 border border-[#aaa] bg-[#e2e2e2]" />
        </div>
      </div>
    </div>
  );
}

export default function App() {
  return (
    <div className="flex h-[768px] w-[1366px] flex-col overflow-hidden bg-[#f4f4f4]">
      <TitleBar />
      <MenuBar />
      <Toolbar />
      <div className="flex h-[593px] shrink-0">
        <DataPane />
        <Cards />
        <View />
      </div>
      <SheetTabs />
      <StatusBar />
      <Taskbar />
    </div>
  );
}
